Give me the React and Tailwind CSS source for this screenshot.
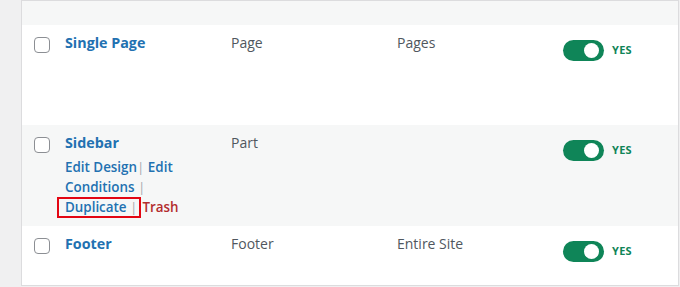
import React from "react";

function Checkbox() {
  return <div className="w-4 h-4 rounded-[4px] border border-[#8c8f94] bg-white shrink-0" />;
}

function Toggle() {
  return (
    <div className="flex items-center gap-2">
      <div className="w-[41px] h-[21px] rounded-full bg-[#0f8558] flex items-center justify-end pr-[5px]">
        <div className="w-[15px] h-[15px] rounded-full bg-white" />
      </div>
      <span className="text-[11px] font-bold text-[#0f8558] tracking-[0.3px]">YES</span>
    </div>
  );
}

function Row({ title, type, location, bg, h, actions }) {
  return (
    <div className={`flex ${bg} ${h}`}>
      <div className="w-[35px] pl-[12px] pt-[12px] shrink-0">
        <Checkbox />
      </div>
      <div className="w-[166px] pl-2 pr-2 pt-[8px] shrink-0">
        <div className="text-[14.3px] leading-[20px] font-bold text-[#2271b1]">{title}</div>
        {actions}
      </div>
      <div className="w-[166px] pl-2 pt-[8px] shrink-0 text-[14px] leading-[20px] text-[#50575e]">{type}</div>
      <div className="w-[166px] pl-2 pt-[8px] shrink-0 text-[14px] leading-[20px] text-[#50575e]">{location}</div>
      <div className="flex-1 pl-2 pt-[15px]">
        <Toggle />
      </div>
    </div>
  );
}

function Actions() {
  return (
    <div className="mt-[4px] text-[13.4px] leading-[20px] font-semibold text-[#2271b1]">
      <div>
        Edit Design<span className="text-[#a7aaad] font-normal">|</span> Edit
      </div>
      <div>
        Conditions <span className="text-[#a7aaad] font-normal">|</span>
      </div>
      <div>
        <span className="relative">
          Duplicate <span className="text-[#a7aaad] font-normal">|</span>
          <span className="absolute left-[-8px] right-[-4px] top-[-1px] bottom-[-2px] border-2 border-[#e30613]" />
        </span>
        <span className="text-[#b32d2e] ml-[5px]">Trash</span>
      </div>
    </div>
  );
}

export default function App() {
  return (
    <div
      className="w-[680px] h-[287px] bg-[#f0f0f1] flex overflow-hidden"
      style={{ fontFamily: '"Open Sans", "Noto Sans", sans-serif' }}
    >
      <div className="w-[21px] shrink-0" />
      <div className="w-[658px] h-[286px] shrink-0 border border-[#dcdcde] bg-white flex flex-col">
        <div className="h-[24px] bg-[#f6f7f7] shrink-0" />
        <Row title="Single Page" type="Page" location="Pages" bg="bg-white" h="h-[100px]" />
        <Row title="Sidebar" type="Part" location="" bg="bg-[#f6f7f7]" h="h-[101px]" actions={<Actions />} />
        <Row title="Footer" type="Footer" location="Entire Site" bg="bg-white" h="flex-1" />
      </div>
    </div>
  );
}
